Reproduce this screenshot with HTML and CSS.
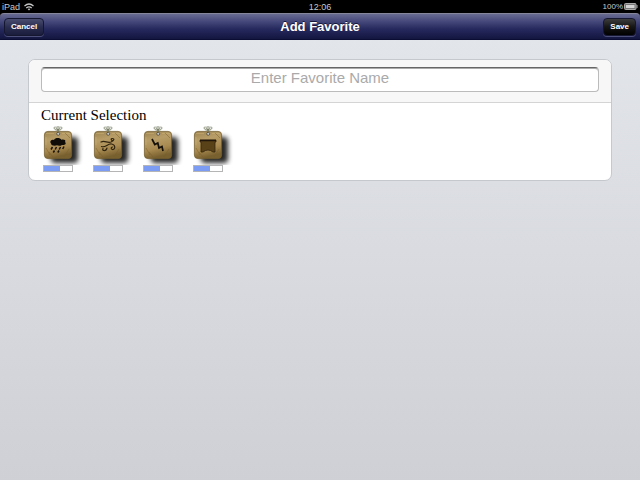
FILE: index.html
```
<!DOCTYPE html>
<html lang="en">
<head>
<meta charset="utf-8">
<title>Add Favorite</title>
<link rel="stylesheet" href="styles.css">
</head>
<body>
<svg class="defs" aria-hidden="true">
  <defs>
    <linearGradient id="wood" x1="0" y1="0" x2="0.25" y2="1">
      <stop offset="0" stop-color="#9c8450"/>
      <stop offset="0.35" stop-color="#b89d68"/>
      <stop offset="0.7" stop-color="#a88a50"/>
      <stop offset="1" stop-color="#78602f"/>
    </linearGradient>
    <filter id="soft" x="-40%" y="-40%" width="180%" height="180%"><feGaussianBlur stdDeviation="2.500"/></filter>
    <g id="tile">
      <rect x="10" y="12" width="27" height="26" rx="4" fill="#000" opacity=".85" filter="url(#soft)"/>
      <rect x="3.400" y="6.400" width="27.200" height="27.200" rx="3.500" fill="url(#wood)" stroke="#75602f" stroke-width=".8"/>
      <path d="M5 8.500h8M21 8.500h8M5 12v8" fill="none" stroke="#d0b57b" stroke-width=".8" opacity=".6"/>
      <path d="M5 23l4 7M24 8l5 5M12 32l-4-5M23 32l5-8" fill="none" stroke="#7a5d2b" stroke-width=".8" opacity=".6"/>
      <path d="M17 1v8M13.500 1.800c-1 2 .5 3.400 3.500 3.400s4.500-1.400 3.500-3.400M15 1.500c0 2 .5 3 2 3.500 1.500-.5 2-1.500 2-3.500" fill="none" stroke="#6d765a" stroke-width=".9"/>
      <circle cx="17.200" cy="8.800" r="1.500" fill="#c5c8cd" stroke="#4c4536" stroke-width=".8"/>
    </g>
  </defs>
</svg>
<div class="status">
  <span class="device">iPad
    <svg width="10" height="8" viewBox="0 0 10 8" fill="none" stroke="#c8c8c8" stroke-width="1.200" aria-hidden="true"><path d="M.5 3Q5-1 9.500 3M2.300 5Q5 2.600 7.700 5"/><path d="M3.700 6.100Q5 5 6.300 6.100L5 7.600z" fill="#c8c8c8" stroke="none"/></svg>
  </span>
  <span class="clock">12:06</span>
  <span class="power">100%
    <svg width="14" height="7" viewBox="0 0 14 7" aria-hidden="true"><rect x=".5" y=".5" width="11.500" height="6" rx="1" fill="#777" stroke="#aaa"/><rect x="2" y="2" width="8.500" height="3" fill="#d2d2d2"/><path d="M12.500 2h1v3h-1z" fill="#aaa"/></svg>
  </span>
</div>
<header class="bar">
  <button class="btn cancel" type="button">Cancel</button>
  <h1>Add Favorite</h1>
  <button class="btn save" type="button">Save</button>
</header>
<main>
  <section class="card">
    <div class="name-row">
      <input type="text" placeholder="Enter Favorite Name" aria-label="Favorite name">
    </div>
    <div class="selection">
      <h2>Current Selection</h2>
      <ul>
        <li>
          <svg class="icon" viewBox="0 0 46 40" role="img" aria-label="Rain"><use href="#tile"/>
            <path d="M10 18.500c-2-2.800 1.500-4.300 3-3.500 1-2.700 6.500-2.500 7.300-.3 3-.8 5 .8 3.700 2.300 2 1.800-.5 3.600-3 3-2 1.300-4 .8-5 .3-2.500 1-6 .2-6-1.800z" fill="#100d08"/>
            <path d="M11.500 22l-1.500 2.500M15.500 22l-1.300 2.500M19.500 22l-1.300 2.500M23 21.500l-1.300 2.500M13.500 25.500l-1.200 2M18 25.500l-1.200 2" stroke="#18120a" stroke-width="1.500"/>
          </svg>
          <progress value="57" max="100" aria-label="Rain volume"></progress>
        </li>
        <li>
          <svg class="icon" viewBox="0 0 46 40" role="img" aria-label="Wind"><use href="#tile"/>
            <path d="M10 17c4-2 6 1.500 10 0 3.500-1.500 3.500-3.500 1.500-3.500s-1.500 2 0 2M10.500 21.500c4 1.500 6-3 10-2.500 4.500.5 3.800 6 1 5.500-2-.5-1.500-2.500 0-2.500M16 23c-1 4-5.500 2.500-4 .5" fill="none" stroke="#30240f" stroke-width="1.200" stroke-linecap="round"/>
          </svg>
          <progress value="57" max="100" aria-label="Wind volume"></progress>
        </li>
        <li>
          <svg class="icon" viewBox="0 0 46 40" role="img" aria-label="Thunder"><use href="#tile"/>
            <path d="M11 14l2.800 5.500 3-1.500 1.200 5 3-1.500 1 4.500" fill="none" stroke="#15100a" stroke-width="1.700"/>
          </svg>
          <progress value="57" max="100" aria-label="Thunder volume"></progress>
        </li>
        <li>
          <svg class="icon" viewBox="0 0 46 40" role="img" aria-label="Fireplace"><use href="#tile"/>
            <path d="M9 15h16v2h-1v10h-2q-5-4-10 0H10V17H9z" fill="#5a4218" stroke="#35260f" stroke-width=".8"/>
            <path d="M9 15.500h16" stroke="#20170a" stroke-width="1.500"/>
          </svg>
          <progress value="57" max="100" aria-label="Fireplace volume"></progress>
        </li>
      </ul>
    </div>
  </section>
</main>
</body>
</html>
```
FILE: styles.css
```
* { box-sizing: border-box; }
html { height: 100%; background: #000; }
body {
  margin: 0;
  min-height: 100%;
  display: flex;
  flex-direction: column;
  font-family: "Liberation Sans", Arial, sans-serif;
}
.defs { position: absolute; width: 0; height: 0; }
.status {
  display: grid;
  grid-template-columns: 1fr auto 1fr;
  align-items: center;
  height: 13px;
  padding: 0 2px;
  background: #000;
  color: #c8c8c8;
  font-size: 9px;
  line-height: 12px;
}
.device, .power { display: flex; align-items: center; gap: 4px; }
.power { justify-content: flex-end; gap: 1px; font-size: 8px; }
.bar {
  display: grid;
  grid-template-columns: 1fr auto 1fr;
  align-items: center;
  height: 27px;
  padding: 0 4px;
  background: linear-gradient(#686b91, #45487a 30%, #26295d 60%, #13163f);
  border-top: 1px solid #85859c;
  border-bottom: 1px solid #0b0d35;
  border-radius: 4px 4px 0 0;
}
h1 {
  margin: 0;
  color: #fff;
  font-size: 13px;
  line-height: 20px;
  text-shadow: 0 -1px 0 #15183c;
}
.btn {
  height: 18px;
  padding: 0 6px;
  border: 1px solid #151731;
  border-radius: 4px;
  color: #fff;
  font: bold 8px/16px "Liberation Sans", Arial, sans-serif;
  box-shadow: 0 1px 0 #4c4f79;
}
.cancel { justify-self: start; background: linear-gradient(#4a4d70, #2b2d50 50%, #1b1d3d); }
.save { justify-self: end; background: linear-gradient(#3c3c3c, #151515 50%, #000); }
main {
  flex: 1;
  padding: 19px 28px;
  background: linear-gradient(#e2e5ea, #cfd0d5);
}
.card {
  overflow: hidden;
  border: 1px solid #c5c8cd;
  border-radius: 7px;
  background: #fff;
}
.name-row {
  padding: 7px 12px 10px;
  background: #f7f7f7;
  border-bottom: 1px solid #d4d4d4;
}
input {
  display: block;
  width: 100%;
  height: 25px;
  padding: 0 8px 4px;
  border: 1px solid #bbb;
  border-top: 1px solid #666;
  border-radius: 4px;
  background: #fff;
  box-shadow: inset 0 1px 0 #aaa;
  font: 15px/20px "Liberation Sans", Arial, sans-serif;
  text-align: center;
}
input::placeholder { color: #aaa; opacity: 1; }
.selection { padding: 3px 12px 8px; }
h2 {
  margin: 0;
  font: 15px/18px Georgia, "Liberation Serif", serif;
  color: #000;
}
ul { display: flex; gap: 4px; margin: 1px 0 0; padding: 0; list-style: none; }
li { width: 46px; }
.icon { display: block; width: 46px; height: 40px; }
progress {
  display: block;
  width: 30px;
  height: 7px;
  margin-left: 2px;
  border: 1px solid #b5b5b5;
  background: #fff;
  appearance: none;
}
progress::-webkit-progress-bar { background: #fff; }
progress::-webkit-progress-value { background: #7b9cf2; }
```
